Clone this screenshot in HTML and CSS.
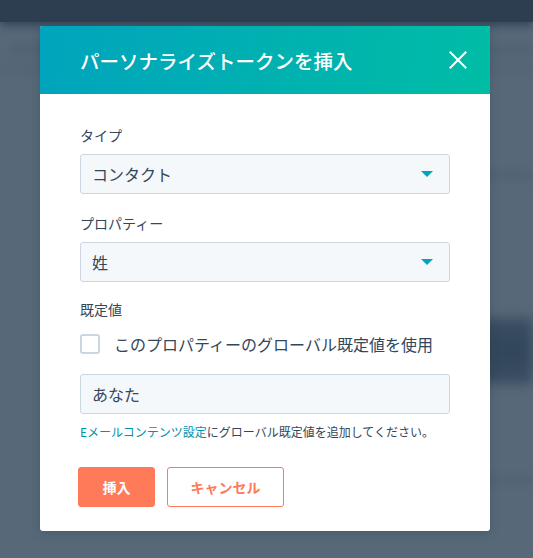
FILE: index.html
```html
<!DOCTYPE html>
<html lang="ja">
<head>
<meta charset="utf-8">
<title>パーソナライズトークンを挿入</title>
<link rel="stylesheet" href="styles.css">
</head>
<body>
<div class="backdrop">
  <div class="bg-topbar"></div>
  <div class="bg-row bg-row-1"></div>
  <div class="bg-row bg-row-2"></div>
  <div class="bg-spacer-1"></div>
  <div class="bg-row bg-row-3"></div>
  <div class="bg-spacer-2"></div>
  <div class="bg-band"></div>
  <div class="bg-spacer-3"></div>
  <div class="bg-row bg-row-4"></div>
</div>

<div class="overlay">
  <div class="modal" role="dialog" aria-labelledby="modal-title">
    <header class="modal-header">
      <h1 id="modal-title" class="modal-title">パーソナライズトークンを挿入</h1>
      <button class="close-btn" aria-label="閉じる">
        <svg width="18" height="18" viewBox="0 0 18 18" aria-hidden="true">
          <path d="M1.5 1.5 L16.5 16.5 M16.5 1.5 L1.5 16.5" stroke="#ffffff" stroke-width="2" stroke-linecap="square" fill="none"/>
        </svg>
      </button>
    </header>
    <div class="modal-body">
      <div class="field field-type">
        <label class="field-label">タイプ</label>
        <div class="select">
          <span class="select-value">コンタクト</span>
          <span class="caret"></span>
        </div>
      </div>
      <div class="field field-property">
        <label class="field-label">プロパティー</label>
        <div class="select">
          <span class="select-value">姓</span>
          <span class="caret"></span>
        </div>
      </div>
      <div class="field field-default">
        <label class="field-label">既定値</label>
        <label class="checkbox-row">
          <span class="checkbox"></span>
          <span class="checkbox-text">このプロパティーのグローバル既定値を使用</span>
        </label>
        <div class="text-input">あなた</div>
        <p class="help"><a class="help-link" href="#">Eメールコンテンツ設定</a>にグローバル既定値を追加してください。</p>
      </div>
      <div class="actions">
        <button class="btn btn-primary">挿入</button>
        <button class="btn btn-secondary">キャンセル</button>
      </div>
    </div>
  </div>
</div>
</body>
</html>
```

FILE: styles.css
```css
* { box-sizing: border-box; }

html, body {
  margin: 0;
  padding: 0;
  width: 533px;
  height: 558px;
  overflow: hidden;
}

body {
  background: #576979;
  font-family: "Noto Sans CJK JP", "Noto Sans", sans-serif;
  color: #33475b;
  position: relative;
}

/* blurred application behind the overlay */
.backdrop {
  display: flex;
  flex-direction: column;
  height: 558px;
}
.bg-topbar {
  height: 22px;
  background: #2d3e50;
  box-shadow: 0 4px 8px #34475a;
}
.bg-row {
  height: 6px;
  margin-left: 10px;
  background: #4d5f70;
  filter: blur(4px);
}
.bg-row-1 { margin-top: 24px; height: 8px; background: #4f6172; }
.bg-row-2 { margin-top: 12px; background: #516374; margin-left: 0; }
.bg-spacer-1 { height: 100px; }
.bg-row-3 { margin-left: 480px; background: #4e6071; }
.bg-spacer-2 { height: 140px; }
.bg-band {
  height: 66px;
  margin-left: 470px;
  background: linear-gradient(180deg, #3a4e62 0%, #32465a 50%, #3a4e62 100%);
  filter: blur(6px);
}
.bg-spacer-3 { height: 93px; }
.bg-row-4 { margin-left: 480px; background: #4f6172; }

.overlay {
  position: absolute;
  inset: 0;
  display: flex;
  justify-content: flex-start;
  align-items: flex-start;
  padding: 26px 0 0 40px;
}

.modal {
  width: 450px;
  background: #ffffff;
  border-radius: 3px;
  overflow: hidden;
  box-shadow: 0 2px 10px rgba(30, 40, 55, 0.25);
}

.modal-header {
  height: 68px;
  display: flex;
  align-items: center;
  justify-content: space-between;
  padding: 0 16px 0 40px;
  background: linear-gradient(100deg, #00a4bd 0%, #00bda5 100%);
}

.modal-title {
  margin: 0;
  font-size: 19.5px;
  font-weight: 500;
  color: #ffffff;
}

.close-btn {
  width: 32px;
  height: 32px;
  padding: 0;
  border: 0;
  background: transparent;
  display: flex;
  align-items: center;
  justify-content: center;
}

.modal-body {
  padding: 30px 40px 24px 40px;
}

.field {
  display: flex;
  flex-direction: column;
}
.field-type { margin-bottom: 18px; }
.field-property { margin-bottom: 16px; }

.field-label {
  font-size: 14px;
  line-height: 22px;
  color: #33475b;
  margin-bottom: 8px;
}

.select,
.text-input {
  height: 40px;
  background: #f5f8fa;
  border: 1px solid #cbd6e2;
  border-radius: 3px;
  display: flex;
  align-items: center;
  padding: 0 16px 0 11px;
  font-size: 16px;
  color: #33475b;
}

.select { justify-content: space-between; }

.caret {
  width: 0;
  height: 0;
  border-left: 6px solid transparent;
  border-right: 6px solid transparent;
  border-top: 6px solid #00a4bd;
}

.field-default .field-label { margin-bottom: 0; }

.checkbox-row {
  display: flex;
  align-items: center;
  gap: 14px;
  margin: 13px 0 19px 0;
  height: 22px;
}

.checkbox {
  width: 20px;
  height: 20px;
  border: 2px solid #cbd6e2;
  border-radius: 3px;
  background: #ffffff;
  flex: none;
}

.checkbox-text {
  font-size: 16px;
  color: #33475b;
}

.help {
  margin: 9px 0 0 0;
  font-size: 12px;
  line-height: 18px;
  color: #33475b;
}

.help-link {
  color: #0091ae;
  text-decoration: none;
}

.actions {
  display: flex;
  gap: 12px;
  margin-top: 26px;
}

.btn {
  height: 40px;
  border-radius: 3px;
  font-family: "Noto Sans CJK JP", "Noto Sans", sans-serif;
  font-size: 14px;
  font-weight: 700;
  padding: 0;
}

.btn-primary {
  width: 77px;
  margin-left: -2px;
  background: #ff7a59;
  border: 1px solid #ff7a59;
  color: #ffffff;
}

.btn-secondary {
  width: 117px;
  background: #ffffff;
  border: 1px solid #ff7a59;
  color: #ff7a59;
}
```
